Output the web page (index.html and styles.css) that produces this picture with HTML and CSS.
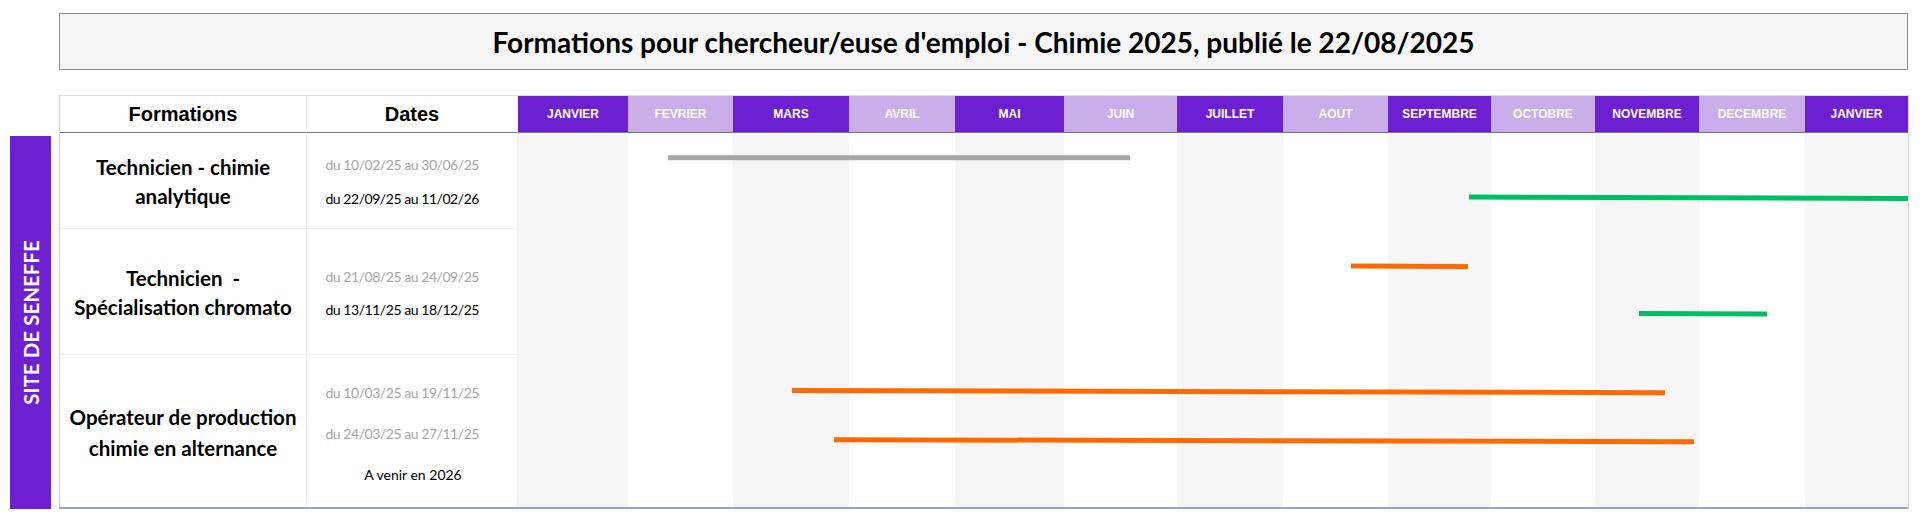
FILE: index.html
```html
<!DOCTYPE html>
<html lang="fr">
<head>
<meta charset="utf-8">
<title>Formations Chimie 2025</title>
<link rel="stylesheet" href="styles.css">
</head>
<body>
<div class="page">
  <header class="title-box">
    <h1 class="title">Formations pour chercheur/euse d'emploi - Chimie 2025, publié le 22/08/2025</h1>
  </header>
  <div class="chart">
    <div class="site-label"><span class="site-text">SITE DE SENEFFE</span></div>
    <div class="table">
      <div class="hcell hcell-main">Formations</div>
      <div class="hcell hcell-main">Dates</div>
      <div class="hcell month dark">JANVIER</div>
      <div class="hcell month light">FEVRIER</div>
      <div class="hcell month dark">MARS</div>
      <div class="hcell month light">AVRIL</div>
      <div class="hcell month dark">MAI</div>
      <div class="hcell month light">JUIN</div>
      <div class="hcell month dark">JUILLET</div>
      <div class="hcell month light">AOUT</div>
      <div class="hcell month dark">SEPTEMBRE</div>
      <div class="hcell month light">OCTOBRE</div>
      <div class="hcell month dark">NOVEMBRE</div>
      <div class="hcell month light">DECEMBRE</div>
      <div class="hcell month dark">JANVIER</div>

      <div class="fcell r1">Technicien - chimie<br>analytique</div>
      <div class="dcell r1 gap1">
        <div class="date past">du 10/02/25 au 30/06/25</div>
        <div class="date">du 22/09/25 au 11/02/26</div>
      </div>

      <div class="fcell r2">Technicien&nbsp; -<br>Spécialisation chromato</div>
      <div class="dcell r2 gap2">
        <div class="date past">du 21/08/25 au 24/09/25</div>
        <div class="date">du 13/11/25 au 18/12/25</div>
      </div>

      <div class="fcell r3 last">Opérateur de production<br>chimie en alternance</div>
      <div class="dcell r3 gap3 last">
        <div class="date past">du 10/03/25 au 19/11/25</div>
        <div class="date past">du 24/03/25 au 27/11/25</div>
        <div class="date upcoming">A venir en 2026</div>
      </div>

      <div class="timeline">
        <div class="stripe grey"></div>
        <div class="stripe"></div>
        <div class="stripe grey"></div>
        <div class="stripe"></div>
        <div class="stripe grey"></div>
        <div class="stripe"></div>
        <div class="stripe grey"></div>
        <div class="stripe"></div>
        <div class="stripe grey"></div>
        <div class="stripe"></div>
        <div class="stripe grey"></div>
        <div class="stripe"></div>
        <div class="stripe grey"></div>
        <svg class="bars" width="1390" height="374" viewBox="0 0 1390 374">
          <line class="bar bar-past" x1="150" y1="24.7" x2="612" y2="24.7"/>
          <line class="bar bar-green" x1="951" y1="64" x2="1390" y2="65.5"/>
          <line class="bar bar-orange" x1="833" y1="133" x2="950" y2="133.5"/>
          <line class="bar bar-green" x1="1121" y1="180.5" x2="1249" y2="181"/>
          <line class="bar bar-orange" x1="274" y1="257.5" x2="1147" y2="259.7"/>
          <line class="bar bar-orange" x1="316" y1="306.7" x2="1176" y2="308.7"/>
        </svg>
      </div>
    </div>
  </div>
</div>
</body>
</html>
```
FILE: styles.css
```css
* { box-sizing: border-box; }
html, body { margin: 0; padding: 0; background: #ffffff; }
body { font-family: Lato, "Liberation Sans", Arial, sans-serif; color: #000; }

.page {
  width: 1920px;
  height: 516px;
  padding-top: 13px;
}

.title-box {
  margin-left: 59px;
  width: 1849px;
  height: 57px;
  background: #f6f6f6;
  border: 1px solid #8a8a8a;
  display: flex;
  align-items: center;
  justify-content: center;
}
.title {
  margin: 0;
  font-family: Lato, "Liberation Sans", sans-serif;
  font-weight: 700;
  font-size: 28px;
  line-height: 1;
  color: #000;
}

.chart {
  margin-top: 25px;
  padding-left: 10px;
  display: flex;
  align-items: flex-end;
  gap: 8px;
}

.site-label {
  width: 41px;
  height: 373px;
  background: #6d1fd2;
  display: flex;
  align-items: center;
  justify-content: center;
}
.site-text {
  writing-mode: vertical-rl;
  transform: rotate(180deg);
  color: #fff;
  font-family: Lato, sans-serif;
  font-weight: 700;
  font-size: 20px;
  letter-spacing: 0.3px;
  white-space: nowrap;
}

.table {
  display: grid;
  grid-template-columns: 247px 211px 110px 105px 116px 106px 109px 113px 106px 105px 103px 104px 104px 106px 103px;
  grid-template-rows: 37px 96px 126px 152px;
  width: 1850px;
  border-left: 1px solid #d0d0d0;
  border-right: 2px solid #d6d6e0;
  border-bottom: 2px solid #9aa0bd;
  border-top: 1px solid #dcdce2;
}

.hcell {
  display: flex;
  align-items: center;
  justify-content: center;
  border-bottom: 1px solid #777;
}
.hcell-main {
  background: #fff;
  font-family: "Liberation Sans", Arial, sans-serif;
  font-weight: 700;
  font-size: 20px;
  color: #000;
  border-right: 1px solid #f0f0f0;
}
.month {
  font-family: "Liberation Sans", Arial, sans-serif;
  font-weight: 700;
  font-size: 12px;
  color: #fff;
}
.month.dark { background: #6d1fd2; }
.month.light { background: #c9aee9; }

.fcell {
  grid-column: 1;
  display: flex;
  align-items: center;
  justify-content: center;
  text-align: center;
  font-family: Lato, sans-serif;
  font-weight: 700;
  font-size: 20.5px;
  line-height: 29px;
  color: #000;
  border-bottom: 1px solid #f0f0f0;
  border-right: 1px solid #f0f0f0;
  padding-top: 2px;
}
.fcell.r3 { line-height: 31px; padding-top: 3px; }

.dcell {
  grid-column: 2;
  display: flex;
  flex-direction: column;
  justify-content: center;
  font-family: Lato, sans-serif;
  font-size: 14px;
  line-height: 17px;
  border-bottom: 1px solid #f0f0f0;
  border-right: 1px solid #f0f0f0;
  padding-top: 2px;
}
.dcell.gap1 { gap: 17px; }
.dcell.gap2 { gap: 16px; }
.dcell.gap3 { gap: 24px; padding-top: 4px; }
.fcell.last, .dcell.last { border-bottom: none; }

.r1 { grid-row: 2; }
.r2 { grid-row: 3; }
.r3 { grid-row: 4; }

.date {
  text-align: right;
  padding-right: 38px;
  letter-spacing: -0.45px;
  color: #000;
}
.date.past { color: #a6a6a6; }
.date.upcoming { text-align: center; padding-right: 0; padding-left: 2px; letter-spacing: 0; }

.timeline {
  grid-column: 3 / -1;
  grid-row: 2 / -1;
  position: relative;
  display: grid;
  grid-template-columns: 110px 105px 116px 106px 109px 113px 106px 105px 103px 104px 104px 106px 103px;
}
.stripe { background: #fff; }
.stripe.grey { background: #f6f6f6; }

.bars {
  position: absolute;
  left: 0;
  top: 0;
  overflow: visible;
}
.bar { stroke-width: 5; stroke-linecap: butt; }
.bar-past { stroke: #a6a6a6; }
.bar-green { stroke: #00bf63; }
.bar-orange { stroke: #ff6a00; }
```
